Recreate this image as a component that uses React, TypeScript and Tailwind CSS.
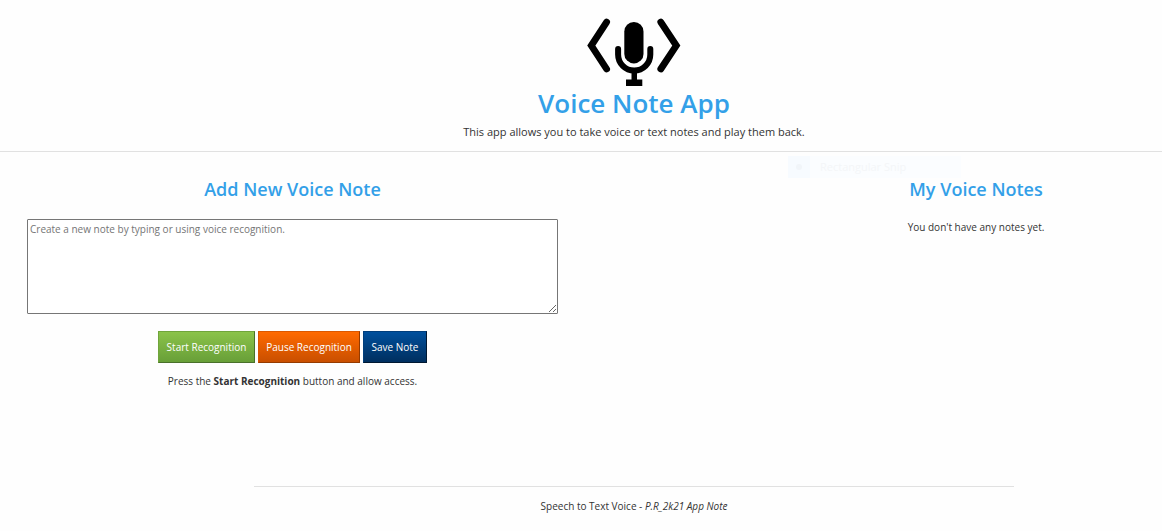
import { useState } from "react";

const buttonBase =
  "h-8 border text-[10px] leading-4 text-white cursor-pointer";

function Logo() {
  return (
    <svg className="h-[76px] w-[104px]" viewBox="0 0 104 76" aria-hidden="true">
      <g fill="none" stroke="#000" strokeWidth="6" strokeLinecap="round">
        <path d="M24.6 12.200 9.300 35.600 24.600 59" strokeWidth="6.8" />
        <path d="M78.800 12.200 94.300 35.600 78.800 59" strokeWidth="6.8" />
        <path d="M36.100 39v5.500a16.100 16.100 0 0 0 32.200 0v-5.500" />
      </g>
      <rect x="42.300" y="12" width="19.200" height="41.400" rx="9.500" fill="#000" />
      <path d="M49.500 60h5.500v9.500H60.300V76H44v-6.500h5.500z" fill="#000" />
    </svg>
  );
}

function SnipHint() {
  return (
    <div
      aria-hidden="true"
      className="absolute left-[788px] top-[156px] flex h-[22px] w-[173px] items-center bg-[#fbfdff] text-[11px] text-[#f4f6f8]"
    >
      <span className="flex h-full w-[22px] items-center justify-center bg-[#f7fbff]">
        <span className="h-1.5 w-1.5 rounded-full bg-[#f1f5f9]" />
      </span>
      <span className="ml-2.5">Rectangular Snip</span>
    </div>
  );
}

export default function App() {
  const [note, setNote] = useState("");
  return (
    <div className="relative min-h-screen overflow-x-hidden bg-[#fefefe] font-['Open_Sans','Noto_Sans',sans-serif] text-[10px] leading-4 text-[#333333]">
      <SnipHint />
      <header className="flex flex-col items-center border-b border-[#e1e1e1] pb-[11px] pl-[106px] pt-2.5 text-center">
        <Logo />
        <h1 className="text-[26px] font-semibold leading-[34px] text-[#33a0e8]">Voice Note App</h1>
        <p className="mt-1 text-[11px] leading-4">
          This app allows you to take voice or text notes and play them back.
        </p>
      </header>

      <main className="relative flex">
        <section className="flex w-1/2 flex-col items-center pl-[27px] pr-[23px] pt-6 text-center">
          <h2 className="text-lg font-semibold leading-[26px] text-[#33a0e8]">Add New Voice Note</h2>
          <textarea
            aria-label="Note"
            className="mt-[17px] block h-[95px] w-full rounded-[1px] border border-[#767676] bg-white px-0.5 py-px text-[10px] leading-4 placeholder:text-[#757575]"
            placeholder="Create a new note by typing or using voice recognition."
            value={note}
            onChange={(e) => setNote(e.target.value)}
          />
          <div className="mt-[17px] flex gap-[3px]">
            <button
              type="button"
              className={`${buttonBase} w-[97px] border-[#70a53b] border-b-[#49702a] border-r-[#49702a] bg-linear-to-b from-[#8bc34a] to-[#689f38]`}
            >
              Start Recognition
            </button>
            <button
              type="button"
              className={`${buttonBase} w-[102px] border-[#db5800] border-b-[#953b00] border-r-[#953b00] bg-linear-to-b from-[#ff6a00] to-[#c94f00]`}
            >
              Pause Recognition
            </button>
            <button
              type="button"
              className={`${buttonBase} w-16 border-[#003e7c] border-b-[#001831] border-r-[#001831] bg-linear-to-b from-[#00509d] to-[#002f5f]`}
            >
              Save Note
            </button>
          </div>
          <p className="mt-2.5">
            Press the <strong>Start Recognition</strong> button and allow access.
          </p>
        </section>

        <section className="flex w-1/2 flex-col items-center pl-[209px] pt-6 text-center">
          <h2 className="text-lg font-semibold leading-[26px] text-[#33a0e8]">My Voice Notes</h2>
          <p className="mt-[17px]">You don't have any notes yet.</p>
        </section>
      </main>

      <footer className="mt-[97px] pl-[106px] text-center">
        <div className="mx-auto max-w-[760px] border-t border-[#e1e1e1] pt-[11px]">
          Speech to Text Voice - <em>P.R_2k21 App Note</em>
        </div>
      </footer>
    </div>
  );
}
